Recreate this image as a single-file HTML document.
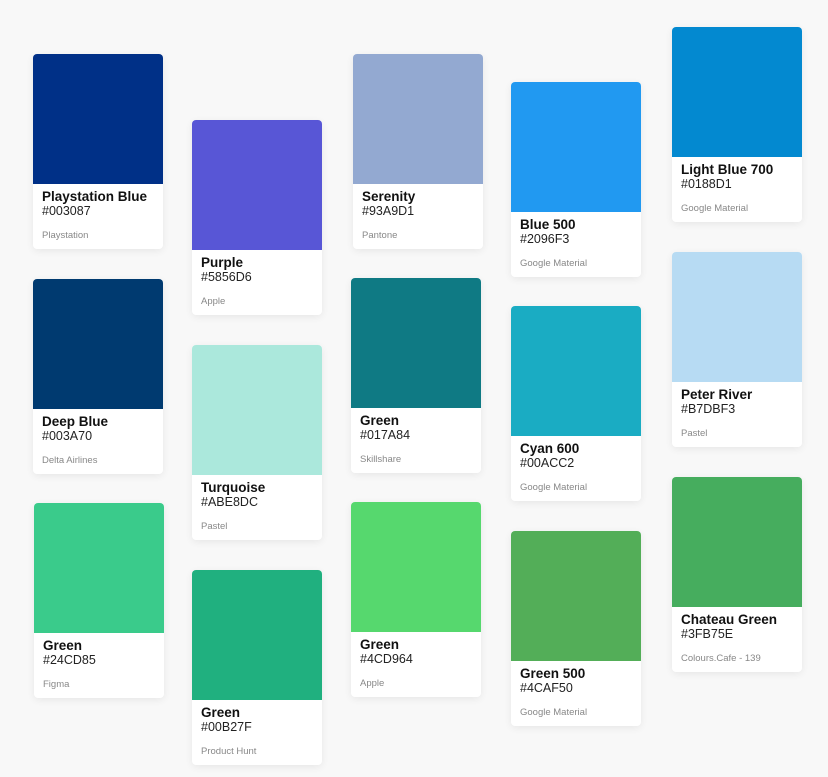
<!DOCTYPE html>
<html><head><style>
body{margin:0;width:828px;height:777px;background:#f8f8f8;position:relative;overflow:hidden;font-family:"Liberation Sans",sans-serif}
.c{position:absolute;width:130px;height:195px;background:#fff;border-radius:4px;box-shadow:0 2px 8px rgba(0,0,0,.07);overflow:hidden}
.s{height:130px}
.n{position:absolute;left:9px;top:135px;font-size:13.5px;font-weight:bold;color:#111}
.h{position:absolute;left:9px;top:150px;font-size:12.5px;color:#222}
.o{position:absolute;left:9px;top:176px;font-size:9.5px;color:#888}
</style></head><body>
<div class="c" style="left:33px;top:54px"><div class="s" style="background:#003087"></div><div class="n">Playstation Blue</div><div class="h">#003087</div><div class="o">Playstation</div></div>
<div class="c" style="left:33px;top:279px"><div class="s" style="background:#003A70"></div><div class="n">Deep Blue</div><div class="h">#003A70</div><div class="o">Delta Airlines</div></div>
<div class="c" style="left:34px;top:503px"><div class="s" style="background:#3ACB8B"></div><div class="n">Green</div><div class="h">#24CD85</div><div class="o">Figma</div></div>
<div class="c" style="left:192px;top:120px"><div class="s" style="background:#5856D6"></div><div class="n">Purple</div><div class="h">#5856D6</div><div class="o">Apple</div></div>
<div class="c" style="left:192px;top:345px"><div class="s" style="background:#ABE8DC"></div><div class="n">Turquoise</div><div class="h">#ABE8DC</div><div class="o">Pastel</div></div>
<div class="c" style="left:192px;top:570px"><div class="s" style="background:#20B07F"></div><div class="n">Green</div><div class="h">#00B27F</div><div class="o">Product Hunt</div></div>
<div class="c" style="left:353px;top:54px"><div class="s" style="background:#93A9D1"></div><div class="n">Serenity</div><div class="h">#93A9D1</div><div class="o">Pantone</div></div>
<div class="c" style="left:351px;top:278px"><div class="s" style="background:#0F7A84"></div><div class="n">Green</div><div class="h">#017A84</div><div class="o">Skillshare</div></div>
<div class="c" style="left:351px;top:502px"><div class="s" style="background:#56D86E"></div><div class="n">Green</div><div class="h">#4CD964</div><div class="o">Apple</div></div>
<div class="c" style="left:511px;top:82px"><div class="s" style="background:#2199F1"></div><div class="n">Blue 500</div><div class="h">#2096F3</div><div class="o">Google Material</div></div>
<div class="c" style="left:511px;top:306px"><div class="s" style="background:#1AACC3"></div><div class="n">Cyan 600</div><div class="h">#00ACC2</div><div class="o">Google Material</div></div>
<div class="c" style="left:511px;top:531px"><div class="s" style="background:#53AE58"></div><div class="n">Green 500</div><div class="h">#4CAF50</div><div class="o">Google Material</div></div>
<div class="c" style="left:672px;top:27px"><div class="s" style="background:#0389D0"></div><div class="n">Light Blue 700</div><div class="h">#0188D1</div><div class="o">Google Material</div></div>
<div class="c" style="left:672px;top:252px"><div class="s" style="background:#B7DBF3"></div><div class="n">Peter River</div><div class="h">#B7DBF3</div><div class="o">Pastel</div></div>
<div class="c" style="left:672px;top:477px"><div class="s" style="background:#46AD5E"></div><div class="n">Chateau Green</div><div class="h">#3FB75E</div><div class="o">Colours.Cafe - 139</div></div>
</body></html>
